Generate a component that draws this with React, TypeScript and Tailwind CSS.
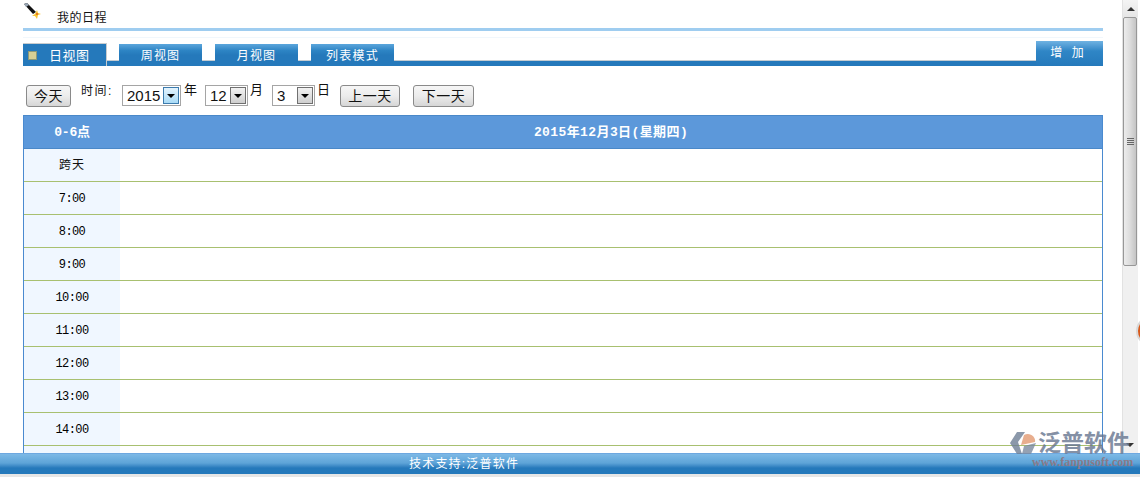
const cjk = "font-['Liberation_Sans','Noto_Sans_CJK_SC',sans-serif]";

const rowLabels = ["7:00", "8:00", "9:00", "10:00", "11:00", "12:00", "13:00", "14:00", "15:00"];

function SelectBox({ value, width, active = false }: { value: string; width: string; active?: boolean }) {
  return (
    <div className={`${width} h-[21px] flex items-center justify-between border border-[#a5a5a5] bg-white pl-[4px] pr-[1px] text-[15px] leading-none text-[#111]`}>
      <span>{value}</span>
      <span
        className={`w-[16px] h-[17px] flex items-center justify-center border ${
          active ? "border-[#3d7bad] bg-gradient-to-b from-[#e3f3fd] to-[#a9dbf6]" : "border-[#707070] bg-gradient-to-b from-[#f2f2f2] to-[#cfcfcf]"
        }`}
      >
        <span className="w-0 h-0 border-l-[4px] border-r-[4px] border-t-[4px] border-l-transparent border-r-transparent border-t-black" />
      </span>
    </div>
  );
}

function GreyButton({ label, width }: { label: string; width: string }) {
  return (
    <button className={`${width} h-[22px] rounded-[3px] border border-[#8a8a8a] bg-gradient-to-b from-[#f6f6f6] via-[#ececec] to-[#d6d6d6] text-[14px] leading-none tracking-[0.5px] text-[#111]`}>
      {label}
    </button>
  );
}

function Tab({ label, width }: { label: string; width: string }) {
  return (
    <div className={`${width} relative h-[22px] flex items-end justify-center pb-[2px] bg-gradient-to-b from-[#5ba6dc] via-[#2d84c4] via-[30%] to-[#2579bb] to-[50%] text-[12px] leading-[15px] tracking-[1.2px] text-white`}>
      {label}
    </div>
  );
}

function Scrollbar() {
  return (
    <div className="w-[16px] h-full flex flex-col bg-[#f0f0f0] border-l border-[#e2e2e2]">
      <div className="h-[17px] flex items-center justify-center bg-gradient-to-b from-[#f4f4f4] to-[#e6e6e6]">
        <span className="w-0 h-0 border-l-[4px] border-r-[4px] border-b-[4px] border-l-transparent border-r-transparent border-b-[#333]" />
      </div>
      <div className="w-[14px] h-[249px] flex items-center justify-center rounded-[2px] border border-[#979797] bg-gradient-to-r from-[#ececec] via-[#dcdcdc] to-[#c4c4c4]">
        <div className="w-[7px] flex flex-col gap-[1px]">
          {[0, 1, 2, 3].map((i) => (
            <span key={i} className="h-[1px] bg-[#666]" />
          ))}
        </div>
      </div>
      <div className="flex-1" />
    </div>
  );
}

function Watermark() {
  return (
    <div className="absolute left-[1010px] top-[431px] w-[130px]">
      <div className="flex items-center gap-[1px] opacity-80">
        <svg width="27" height="24" viewBox="0 0 27 24">
          <path d="M7 1H15L8 11L12 23H7L0 12Z" fill="#6f7f96" />
          <path d="M14 4C20 1 26 6 25 11L11 14Z" fill="#e39a72" />
          <path d="M14 15L26 12L21 23H12Z" fill="#7b8aa0" />
        </svg>
        <span className="text-[23px] leading-[24px] font-bold text-[#66758f] whitespace-nowrap">泛普软件</span>
      </div>
      <div className="ml-[22px] mt-[1px] font-['Liberation_Serif',serif] text-[12px] leading-[13px] font-bold tracking-[0px] text-[#8a7a88] whitespace-nowrap">
        www.fanpusoft.com
      </div>
    </div>
  );
}

export default function App() {
  return (
    <div className={`relative w-[1140px] h-[477px] overflow-hidden flex bg-white ${cjk}`}>
      <div className="w-[1122px] pl-[23px] pr-[19px]">
        {/* title */}
        <div className="h-[28px] relative flex items-center pl-[34px] pt-[7px] text-[12px] tracking-[0.5px] text-[#111]">
          <svg className="absolute left-0 top-[2px]" width="20" height="18" viewBox="0 0 20 18">
            <path d="M1 2L4 1L13 10L10 12Z" fill="#111" />
            <path d="M1 2L4 1L6 3L3 5Z" fill="#9aa7b5" />
            <path d="M14 8L15 11L18 12L15 13L14 17L12 14L9 14L12 12Z" fill="#f7c531" />
            <path d="M13 11L15 11L15 13L13 13Z" fill="#e8781e" />
          </svg>
          我的日程
        </div>
        <div className="h-[3px] bg-[#9fcdf0]" />
        <div className="h-[7px] border-b border-[#f1f7fc]" />

        {/* tab bar */}
        <div className="h-[28px] relative flex flex-col justify-end">
          <div className="flex items-end">
            <div className="w-[84px] h-[23px] flex items-center bg-[#2579bb] border-t border-r border-[#c9ccce] pl-[5px] text-white">
              <span className="w-[9px] h-[9px] bg-[#d6cf94] border border-[#8d9a78]" />
              <span className="ml-[12px] pt-[1px] text-[13px] tracking-[0.5px]">日视图</span>
            </div>
            <div className="flex flex-1 flex-col">
              <div className="flex gap-[13px] pl-[12px] h-[22px] items-end">
                <Tab label="周视图" width="w-[83px]" />
                <Tab label="月视图" width="w-[83px]" />
                <Tab label="列表模式" width="w-[83px]" />
              </div>
              <div className="h-[6px] -mt-[6px] bg-[#2579bb] border-t border-[#c4ccd2]" />
            </div>
          </div>
          <div className="absolute right-0 top-[3px] w-[67px] h-[25px] bg-gradient-to-b from-[#6fb2e2] via-[#2f86c6] via-[40%] to-[#2579bb] flex items-center justify-center pr-[4px] pb-[2px] text-[12px] tracking-[1px] text-white">
            增&nbsp;&nbsp;加
          </div>
        </div>

        {/* toolbar */}
        <div className="h-[49px] flex items-center pt-[10px] pl-[3px] text-[13px] text-[#111]">
          <GreyButton label="今天" width="w-[45px]" />
          <span className="ml-[10px] w-[41px] -mt-[9px] text-[12px] tracking-[1.5px]">时间:</span>
          <SelectBox value="2015" width="w-[59px]" active />
          <span className="ml-[3px] -mt-[11px] text-[13px]">年</span>
          <div className="ml-[8px]">
            <SelectBox value="12" width="w-[43px]" />
          </div>
          <span className="ml-[2px] -mt-[11px] text-[13px]">月</span>
          <div className="ml-[9px]">
            <SelectBox value="3" width="w-[43px]" />
          </div>
          <span className="ml-[2px] -mt-[11px] text-[13px]">日</span>
          <div className="ml-[10px]">
            <GreyButton label="上一天" width="w-[60px]" />
          </div>
          <div className="ml-[13px]">
            <GreyButton label="下一天" width="w-[61px]" />
          </div>
        </div>

        {/* schedule table */}
        <div className="w-[1080px] border-x border-[#4a8ad0]">
          <div className="h-[34px] flex items-center bg-[#5c98da] border-y border-[#4a88c8] pt-[1px] text-[13px] font-bold text-white">
            <div className="w-[96px] text-center font-['Liberation_Mono','Noto_Sans_CJK_SC',monospace] tracking-[-0.2px]">0-6点</div>
            <div className="flex-1 text-center font-['Liberation_Mono','Noto_Sans_CJK_SC',monospace] tracking-[0.4px]">2015年12月3日(星期四)</div>
          </div>
          <div className="h-[33px] flex border-b border-[#a8c070]">
            <div className="w-[96px] bg-[#f0f7ff] flex items-center justify-center text-[12px] tracking-[1px] text-[#111]">跨天</div>
            <div className="flex-1" />
          </div>
          {rowLabels.map((label) => (
            <div key={label} className="h-[33px] flex border-b border-[#a8c070]">
              <div className="w-[96px] bg-[#f0f7ff] pt-[1px] flex items-center justify-center font-['Liberation_Mono',monospace] text-[12px] tracking-[-0.6px] text-black">
                {label}
              </div>
              <div className="flex-1" />
            </div>
          ))}
        </div>
      </div>

      <Scrollbar />

      {/* bottom scroll arrow */}
      <span className="absolute left-[1126px] top-[443px] w-0 h-0 border-l-[4px] border-r-[4px] border-t-[4px] border-l-transparent border-r-transparent border-t-[#333]" />

      {/* floating widget, mostly off screen */}
      <div className="absolute left-[1136px] top-[316px] w-[30px] h-[30px] rounded-full border-[2px] border-[#d8d8d8] bg-[#d8591a]" />

      {/* footer bar */}
      <div className="absolute left-0 right-0 top-[453px] h-[21px] flex items-center pl-[409px] bg-gradient-to-b from-[#7db9e6] via-[#5ea4d8] via-[45%] to-[#2579bb] to-[70%] border-t border-[#6ea8e0] text-[12px] tracking-[1.2px] text-white">
        技术支持:泛普软件
      </div>
      <div className="absolute left-0 right-0 top-[474px] h-[3px] bg-[#e6e6e6]" />

      <Watermark />
    </div>
  );
}
